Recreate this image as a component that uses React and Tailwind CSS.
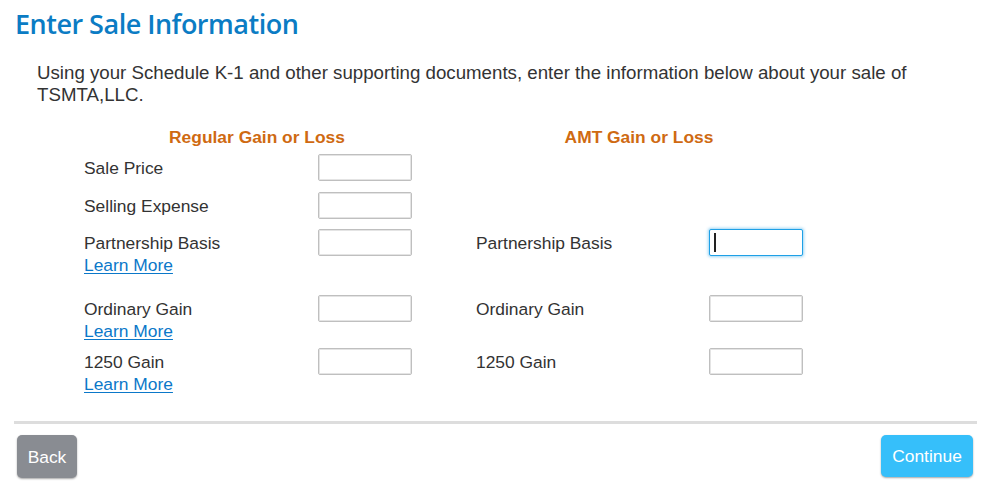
import React from "react";

function Field({ focused }) {
  return (
    <div className="relative w-[94px] h-[27px]">
      <input
        type="text"
        className={
          focused
            ? "w-full h-full rounded-[2px] border border-[#1ea0e6] bg-white outline-none shadow-[0_0_3px_1px_rgba(30,160,230,0.45)]"
            : "w-full h-full rounded-[2px] border border-[#bfbfbf] bg-white outline-none shadow-[inset_0_0_0_1px_#e4e4e4]"
        }
      />
      {focused && (
        <span className="absolute left-[5px] top-[4px] w-[1.5px] h-[19px] bg-[#222]" />
      )}
    </div>
  );
}

function LearnMore() {
  return (
    <a href="#" className="block w-fit text-[#0b78c9] underline decoration-1 underline-offset-[2px]">
      Learn More
    </a>
  );
}

function Row({ left, right, learn, focused, className }) {
  return (
    <div className={"flex items-start " + (className || "")}>
      <div className="w-[234px] pt-[3px]">
        <div>{left}</div>
        {learn && <LearnMore />}
      </div>
      <Field />
      <div className="w-[64px]" />
      {right ? (
        <>
          <div className="w-[233px] pt-[3px]">{right}</div>
          <Field focused={focused} />
        </>
      ) : null}
    </div>
  );
}

export default function App() {
  return (
    <div
      className="w-[999px] h-[497px] bg-white text-[#333] text-[17.4px] leading-[22px] overflow-hidden"
      style={{ fontFamily: '"Liberation Sans", Arial, sans-serif' }}
    >
      <h1
        className="pl-[15px] pt-[6px] text-[27px] leading-[36px] font-semibold tracking-[-0.5px] text-[#0b7cc4]"
        style={{ fontFamily: '"Open Sans", "Noto Sans", sans-serif' }}
      >
        Enter Sale Information
      </h1>

      <p className="pl-[37px] pr-[60px] mt-[20px] text-[18.7px]">
        Using your Schedule K-1 and other supporting documents, enter the information below about your sale of TSMTA,LLC.
      </p>

      <div className="pl-[84px] mt-[20px]">
        <div className="flex font-bold text-[#cf6a12]">
          <div className="w-[346px] text-center">Regular Gain or Loss</div>
          <div className="w-[46px]" />
          <div className="w-[326px] text-center">AMT Gain or Loss</div>
        </div>

        <Row className="mt-[6px]" left="Sale Price" />
        <Row className="mt-[11px]" left="Selling Expense" />
        <Row className="mt-[10px]" left="Partnership Basis" learn right="Partnership Basis" focused />
        <Row className="mt-[19px]" left="Ordinary Gain" learn right="Ordinary Gain" />
        <Row className="mt-[6px]" left="1250 Gain" learn right="1250 Gain" />
      </div>

      <div className="ml-[14px] w-[963px] h-[3px] bg-[#dddddd] mt-[26px]" />

      <div className="flex justify-between pl-[17px] pr-[26px] mt-[11px]">
        <button className="w-[60px] h-[43px] rounded-[5px] bg-[#898c92] text-white shadow-[0_1px_2px_rgba(0,0,0,0.35)]">
          Back
        </button>
        <button className="w-[92px] h-[42px] rounded-[5px] bg-[#36bffa] text-white shadow-[0_1px_2px_rgba(0,0,0,0.35)]">
          Continue
        </button>
      </div>
    </div>
  );
}
